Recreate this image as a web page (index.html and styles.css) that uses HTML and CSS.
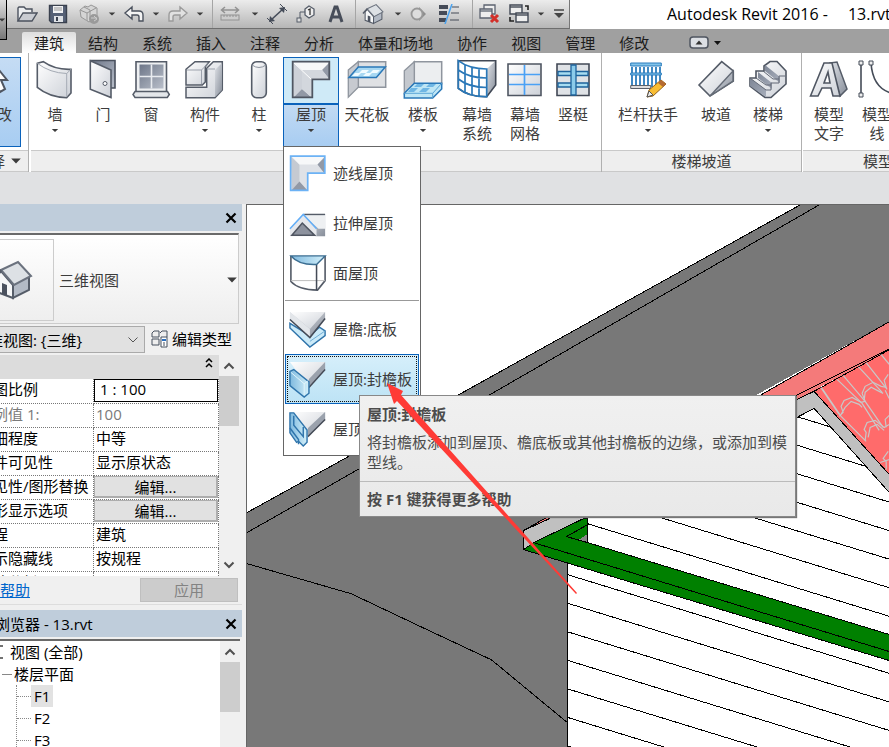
FILE: index.html
```html
<!DOCTYPE html>
<html lang="zh-CN">
<head>
<meta charset="utf-8">
<title>Autodesk Revit 2016 - 13.rvt</title>
<link rel="stylesheet" href="styles.css">
</head>
<body>
<svg class="defs" aria-hidden="true">
  <defs>
    <linearGradient id="face" x1="0" y1="0" x2="1" y2="1"><stop offset="0" stop-color="#fff"/><stop offset="1" stop-color="#cdd1d8"/></linearGradient>
    <linearGradient id="side" x1="0" y1="0" x2="1" y2="1"><stop offset="0" stop-color="#dfe2e7"/><stop offset="1" stop-color="#868d99"/></linearGradient>
    <linearGradient id="dark" x1="0" y1="0" x2="1" y2="1"><stop offset="0" stop-color="#6d7688"/><stop offset="1" stop-color="#b9bfca"/></linearGradient>
    <linearGradient id="blue" x1="0" y1="0" x2="1" y2="0"><stop offset="0" stop-color="#7fb9de"/><stop offset="1" stop-color="#d3f0fa"/></linearGradient>
    <symbol id="down" viewBox="0 0 10 6"><path d="M1 1h8l-4 4z" fill="#3c3c3c"/></symbol>
    <symbol id="close" viewBox="0 0 12 12"><path d="M1.500 1.500l9 9M10.500 1.500l-9 9" stroke="#000" stroke-width="2.200"/></symbol>
    <symbol id="chev-up" viewBox="0 0 12 8"><path d="M1.500 6.500L6 2l4.500 4.500" fill="none" stroke="#505050" stroke-width="2"/></symbol>
    <symbol id="chev-down" viewBox="0 0 12 8"><path d="M1.500 1.500L6 6l4.500-4.500" fill="none" stroke="#505050" stroke-width="2"/></symbol>
    <symbol id="house" viewBox="0 0 42 42">
      <path d="M6 17l4-5 12 14v13L6 33z" fill="#f6f7f8" stroke="#555c68" stroke-width="2"/>
      <path d="M22 25l16-8v14l-16 8z" fill="#b3bac5" stroke="#555c68" stroke-width="2"/>
      <path d="M11 24l5 2v11l-5-2z" fill="#4b525f"/>
      <path d="M10 11L27 3l13 14-17 9z" fill="#dde1e5" stroke="#6b727e" stroke-width="2"/>
      <path d="M10 11l-8 9" stroke="#555c68" stroke-width="3"/>
    </symbol>
  </defs>
</svg>

<header class="titlebar">
  <div class="quick">
    <button class="app" aria-label="应用程序菜单"><svg width="8" height="6"><use href="#down"/></svg></button>
    <button class="q30" aria-label="打开"><svg width="22" height="20" viewBox="0 0 22 20"><path d="M2 17V4l1-1h5l2 2h6v3" fill="#eceef0" stroke="#4b525e" stroke-width="1.400"/><path d="M2 17L7 9h14l-5 8z" fill="#c9ccd2" stroke="#4b525e" stroke-width="1.400"/></svg></button>
    <button class="q32" aria-label="保存"><svg width="20" height="20" viewBox="0 0 20 20"><path d="M1.500 1.500h17v17h-15l-2-2z" fill="#566176" stroke="#3a414e" stroke-width="1.400"/><path d="M5 2h10v7H5z" fill="#f1f2f4"/><path d="M6 4h8M6 6h8" stroke="#999"/><path d="M6 12h9v6H6z" fill="#dfe2e6"/><path d="M8 13h2v4H8z" fill="#3a414e"/></svg></button>
    <button class="q30" aria-label="同步"><svg width="22" height="22" viewBox="0 0 22 22"><g fill="#d5d5d5" stroke="#969696"><path d="M2 7l5-4 3 1 3-2 6 3v9l-8 5-8-5z"/><path d="M2 7l7 3v8M9 10l9-5M6 4l6 3v9"/></g><circle cx="16" cy="16" r="5" fill="#9a9a9a"/><path d="M13 15h6M16 13l3 3-3 2" stroke="#ccc" fill="none"/></svg></button>
    <button class="q16" aria-label="同步选项"><svg width="8" height="6"><use href="#down"/></svg></button>
    <button class="q28" aria-label="放弃"><svg width="22" height="18" viewBox="0 0 22 18"><path d="M2 8l7-6v4h7q4 0 4 4v6h-4v-4q0-2-2-2H9v4z" fill="#f3f3f3" stroke="#4b525e" stroke-width="1.400"/></svg></button>
    <button class="q16" aria-label="放弃列表"><svg width="8" height="6"><use href="#down"/></svg></button>
    <button class="q28" aria-label="重做"><svg width="22" height="18" viewBox="0 0 22 18"><path d="M20 8l-7-6v4H6q-4 0-4 4v6h4v-4q0-2 2-2h5v4z" fill="#e1e1e1" stroke="#9b9b9b" stroke-width="1.400"/></svg></button>
    <button class="q16" aria-label="重做列表"><svg width="8" height="6"><use href="#down"/></svg></button>
    <span class="divider"></span>
    <button class="q34" aria-label="测量"><svg width="20" height="16" viewBox="0 0 20 16"><path d="M2 4h16M5 1L1.500 4 5 7M15 1l3.500 3L15 7" fill="none" stroke="#929292" stroke-width="1.500"/><rect x="1" y="9" width="18" height="5" fill="#ccc" stroke="#929292"/><path d="M4 9v2M7 9v2M10 9v2M13 9v2M16 9v2" stroke="#929292"/></svg></button>
    <button class="q16" aria-label="测量选项"><svg width="8" height="6"><use href="#down"/></svg></button>
    <button class="q28" aria-label="对齐尺寸标注"><svg width="22" height="22" viewBox="0 0 22 22"><path d="M5 17L17 6" stroke="#454c59" stroke-width="1.600"/><path d="M3 19l1-6 5 5zM19 4l-1 6-5-5z" fill="#454c59"/><path d="M1 15l6 6M14 1l7 7" stroke="#454c59"/></svg></button>
    <button class="q30" aria-label="按类别标记"><svg width="20" height="18" viewBox="0 0 20 18"><path d="M9 4l4-3 5 3v6l-5 3-4-3z" fill="#eee" stroke="#555c68" stroke-width="1.300"/><path d="M9 7H4v7" fill="none" stroke="#555c68"/><rect x="1" y="13" width="4" height="4" fill="#ddd" stroke="#555c68"/><path d="M12 5l2-1v6" fill="none" stroke="#333" stroke-width="1.300"/></svg></button>
    <button class="q30" aria-label="文字"><svg width="18" height="20" viewBox="0 0 18 20"><path d="M3 18L8 3h2l5 15M5 13h8" fill="none" stroke="#474d59" stroke-width="3"/></svg></button>
    <span class="divider"></span>
    <button class="q34" aria-label="默认三维视图"><svg width="22" height="22"><use href="#house"/></svg></button>
    <button class="q16" aria-label="三维视图选项"><svg width="8" height="6"><use href="#down"/></svg></button>
    <button class="q24" aria-label="剖面"><svg width="18" height="18" viewBox="0 0 18 18"><path d="M10 2l7 7-7 7z" fill="#8d8d8d"/><circle cx="8" cy="9" r="5.500" fill="#ddd" stroke="#989898" stroke-width="1.800"/></svg></button>
    <button class="q38" aria-label="细线"><svg width="22" height="20" viewBox="0 0 22 20"><path d="M1 3h9M1 9h8M1 16h7" stroke="#454b57" stroke-width="4"/><path d="M14 3h7M13 9h8M12 16h9" stroke="#454b57"/><path d="M14 0L7 20" stroke="#4aa3ef" stroke-width="1.500"/></svg></button>
    <span class="divider"></span>
    <button class="q32" aria-label="关闭隐藏窗口"><svg width="22" height="22" viewBox="0 0 22 22"><g fill="#eee" stroke="#5c6370" stroke-width="1.300"><path d="M6 2h11v9H6z"/><path d="M2 6h12v9H2z"/><path d="M2 8h12"/></g><path d="M13 12l7 7M20 12l-7 7" stroke="#d3302a" stroke-width="3"/></svg></button>
    <button class="q28" aria-label="切换窗口"><svg width="22" height="22" viewBox="0 0 22 22"><g fill="#eee" stroke="#414854" stroke-width="1.400"><path d="M2 2h12v9H2z"/><path d="M2 4h12"/><path d="M8 10h12v9H8z"/><path d="M8 12h12"/></g><path d="M17 3h3v4M2 14v4h4" fill="none" stroke="#222" stroke-width="1.600"/></svg></button>
    <button class="q16" aria-label="切换窗口选项"><svg width="8" height="6"><use href="#down"/></svg></button>
    <button class="q20" aria-label="自定义快速访问工具栏"><svg width="12" height="10" viewBox="0 0 12 10"><path d="M1 1h10" stroke="#444" stroke-width="1.500"/><path d="M1 4h10L6 9z" fill="#444"/></svg></button>
  </div>
  <h1 class="app-title"><span>Autodesk Revit 2016 -</span><span>13.rvt</span></h1>
</header>

<nav class="tabs">
  <button class="tab current">建筑</button><button class="tab">结构</button><button class="tab">系统</button><button class="tab">插入</button><button class="tab">注释</button><button class="tab">分析</button><button class="tab">体量和场地</button><button class="tab">协作</button><button class="tab">视图</button><button class="tab">管理</button><button class="tab">修改</button>
  <button class="ribbon-toggle" aria-label="最小化功能区"><svg width="32" height="14" viewBox="0 0 32 14"><rect x="1" y="1" width="18" height="11" rx="3" fill="#dcdfe4" stroke="#4f5560" stroke-width="1.500"/><path d="M6.500 8.500h7L10 4.500z" fill="#333"/><path d="M25 5h7l-3.500 4z" fill="#111"/></svg></button>
</nav>

<section class="ribbon">
  <div class="panel select-panel">
    <div class="tools"><button class="tool active plain"><svg class="icon" viewBox="0 0 40 40"><path d="M23 6l12 15h-6l4 9-5 3-4-8-6 6z" fill="#fff" stroke="#4f5662" stroke-width="2"/></svg><span class="label">修改</span></button></div>
    <div class="panel-name">选择<svg width="12" height="8"><use href="#down"/></svg></div>
  </div>
  <div class="panel build">
    <div class="tools">
      <button class="tool w48"><svg class="icon" viewBox="0 0 40 40"><path d="M2.300 4.300L8.300 2.700Q20 11 36 10.300V34l-4.300 4.700Q14 38 2.300 28.300z" fill="url(#face)" stroke="#555c68" stroke-width="1.600"/><path d="M2.300 4.300Q15 14 31.700 14.500L36 10.300M31.700 14.500V38" fill="none" stroke="#a4aab4"/></svg><span class="label">墙</span><svg class="more"><use href="#down"/></svg></button>
      <button class="tool w48"><svg class="icon" viewBox="0 0 40 40"><path d="M7 1.500h25V29h-6" fill="url(#dark)" stroke="#4a515e" stroke-width="1.600"/><path d="M7.300 1.700L28 11v27.500L7.300 30.300z" fill="url(#face)" stroke="#555c68" stroke-width="1.600"/><circle cx="22" cy="24.500" r="2" fill="#fff" stroke="#555c68"/></svg><span class="label">门</span></button>
      <button class="tool w48"><svg class="icon" viewBox="0 0 40 40"><path d="M5 2.700h30.500v30H5z" fill="#eef0f2" stroke="#555c68" stroke-width="1.600"/><path d="M8.500 5.500h24v24h-24z" fill="url(#dark)"/><path d="M20.500 5.500v24M8.500 17.500h24" stroke="#e8ebef" stroke-width="1.600"/><path d="M4 32.500h32.500l1.800 3-2 3H4l-2-3z" fill="#e4e7ea" stroke="#555c68" stroke-width="1.500"/></svg><span class="label">窗</span></button>
      <button class="tool w60"><svg class="icon" viewBox="0 0 40 40"><path d="M1 10.300L10 2.700h14.300l-4 5V23l-3 3H1z" fill="url(#face)" stroke="#555c68" stroke-width="1.500"/><path d="M1 28.300h20.700v-19l6.600-6.600h9V31L30 38.700H1z" fill="url(#face)" stroke="#555c68" stroke-width="1.500"/><path d="M30 11l7-7v27l-7 7z" fill="url(#side)"/><path d="M22 10h8M2 11h14.500v14M16.500 11l7-7" fill="none" stroke="#9ba1ac"/></svg><span class="label">构件</span><svg class="more"><use href="#down"/></svg></button>
      <button class="tool w48"><svg class="icon" viewBox="0 0 40 40"><rect x="12.700" y="2.700" width="14.600" height="36" rx="5" fill="url(#face)" stroke="#555c68" stroke-width="1.600"/><path d="M13 6q7 5 14 0" fill="none" stroke="#8d949f"/></svg><span class="label">柱</span><svg class="more"><use href="#down"/></svg></button>
      <div class="dropdown">
        <button class="tool w56 active split" aria-expanded="true"><svg class="icon" viewBox="0 0 40 40"><path d="M1.700 2.700h36.600v17.600h-17v18H1.700z" fill="#e8eaee"/><path d="M2.500 3.500L11 11v19l-8.500 8z" fill="#cdd1d8"/><path d="M3 3.500h35L31 11H11z" fill="#f7f8f9"/><path d="M31 11l7-7v16zM11 30l9 8H3z" fill="#9299a6"/><path d="M11 11h20l7 8.500H20.500V38L11 30z" fill="#d3d7dd"/><path d="M2.500 3.500l18 17" stroke="#fff"/><path d="M1.700 2.700h36.600v17.600h-17v18H1.700z" fill="none" stroke="#4f5662" stroke-width="1.800"/></svg><span class="label">屋顶</span><svg class="more"><use href="#down"/></svg></button>
        <div class="menu" role="menu">
          <button class="menu-item" role="menuitem"><svg viewBox="0 0 40 40"><path d="M1.700 2.200h36v18h-18v18h-18z" fill="#dfe2e7"/><path d="M2 3L11 11v19l-8 8z" fill="#c5cad2"/><path d="M3 3h34l-7 8H11z" fill="#f7f8f9"/><path d="M30 11l7-7v16zM11 29l8 9H3z" fill="#9299a6"/><path d="M1.700 2.200h36v18h-18v18h-18z" fill="none" stroke="#6cb2f5" stroke-width="1.800"/></svg>迹线屋顶</button>
          <button class="menu-item" role="menuitem"><svg viewBox="0 0 40 40"><path d="M16 11h22v23H28z" fill="url(#side)"/><path d="M15 11l16 15h7V11z" fill="#eef0f2"/><path d="M16 11h22" stroke="#555c68" stroke-width="1.500"/><path d="M1 34V26l14-15 14 15v8z" fill="#e6e8ec"/><path d="M3 33l11-13 13 13z" fill="#8d929e" stroke="#4f5561" stroke-width="1.600"/><path d="M1 26l14-15 14 15" fill="none" stroke="#63aef7" stroke-width="1.600"/></svg>拉伸屋顶</button>
          <button class="menu-item" role="menuitem"><svg viewBox="0 0 40 40"><path d="M2 2v27q8 9 28 9l8-10V2" fill="#fff" stroke="#555c68" stroke-width="1.700"/><path d="M2 28h36" stroke="#bbb"/><path d="M29 11v27" stroke="#444b57" stroke-width="1.600"/><path d="M2 2h36l-9 9Q11 12 2 2z" fill="url(#blue)" stroke="#3b6d91" stroke-width="1.500"/></svg>面屋顶</button>
          <hr>
          <button class="menu-item" role="menuitem"><svg viewBox="0 0 40 40"><path d="M1 14v5l21 20 16-12v-5l-6-4-10 9z" fill="#cbeaf8" stroke="#2f74ab" stroke-width="1.500"/><path d="M22 33l16-11" stroke="#6cabd4"/><path d="M1 2v8l21 19 16-20V2z" fill="url(#side)"/><path d="M1 2h37L22 20z" fill="url(#face)"/><path d="M22 20v9L1 10V2z" fill="#e3e6ea"/><path d="M1 10l21 19L38 9" fill="none" stroke="#444a56" stroke-width="1.600"/></svg>屋檐:底板</button>
          <div class="item-wrap">
            <button class="menu-item hot" role="menuitem" aria-describedby="tip"><svg viewBox="0 0 40 40"><path d="M1 2h37v8L21 29z" fill="url(#face)"/><path d="M38 2v8L21 29V20z" fill="#9ba2ad"/><path d="M38 10L21 29" stroke="#444a56" stroke-width="1.500"/><path d="M1 12l4-2 16 13v12l-5 4L1 27z" fill="url(#blue)" stroke="#2f74ab" stroke-width="1.500"/><path d="M16 37V25l4-3M2 13l14 12" fill="none" stroke="#e4f6fc"/></svg>屋顶:封檐板</button>
            <div class="tip" id="tip" role="tooltip">
              <div class="tip-body"><strong>屋顶:封檐板</strong><p>将封檐板添加到屋顶、檐底板或其他封檐板的边缘，或添加到模型线。</p></div>
              <div class="tip-help"><strong>按 F1 键获得更多帮助</strong></div>
            </div>
          </div>
          <button class="menu-item" role="menuitem"><svg viewBox="0 0 40 40"><path d="M1 2h37v8L20 29z" fill="url(#face)"/><path d="M38 2v8L20 29V19z" fill="#9ba2ad"/><path d="M38 10L20 28" stroke="#444a56" stroke-width="1.500"/><path d="M1 3h4l14 18v13l-4 4-5-5-2 1-7-10z" fill="url(#blue)" stroke="#2f74ab" stroke-width="1.500"/><path d="M5 6v10l10 12V18M1 19l9 12v5" fill="none" stroke="#2f74ab" stroke-width="1.500"/></svg>屋顶:檐槽</button>
        </div>
      </div>
      <button class="tool w56"><svg class="icon" viewBox="0 0 40 40"><path d="M11.300 2.700h27.400v25.600H11.300z" fill="#dfe1e4" stroke="#8f959e" stroke-width="1.500"/><path d="M1.300 11l10-8.300v25.600l-10 10z" fill="#c7cad0" stroke="#8f959e" stroke-width="1.300"/><path d="M11.300 8h27l-9 10.500H2z" fill="#a8d8f2" stroke="#2a78b8" stroke-width="1.500"/><path d="M15 11h7l-3 3h-7zM26 11h7l-3 3h-7zM8 14h6l-3 3H5zM19 14h6l-3 3h-6z" fill="#f0fbff"/></svg><span class="label">天花板</span></button>
      <button class="tool w56"><svg class="icon" viewBox="0 0 40 40"><path d="M11.300 2.700h27.400v22H11.300z" fill="#eceef0" stroke="#8f959e" stroke-width="1.500"/><path d="M1.300 11.700l10-9v22l-10 9.600z" fill="#c4c8ce" stroke="#8f959e" stroke-width="1.300"/><path d="M11.300 24.300h27.400V30l-9 9H1.300v-4.700z" fill="#bfe6f5" stroke="#2a78b8" stroke-width="1.500"/><path d="M1.300 34.300h28.400l9-10M29.700 34.300V39" fill="none" stroke="#5aa5d6"/><path d="M14 25h7l-3 3h-7zM26 25h7l-3 3h-7zM8 29h7l-4 4H5zM20 29h7l-4 4h-7z" fill="#6fb6e4"/></svg><span class="label">楼板</span><svg class="more"><use href="#down"/></svg></button>
      <button class="tool w52"><svg class="icon" viewBox="0 0 40 40"><path d="M29.700 10l9-8.300V26l-9 11.700z" fill="url(#side)"/><path d="M1.300 1.700h37.400V26l-9 11.700Q12 38 1.300 29.300z" fill="none" stroke="#414855" stroke-width="1.600"/><path d="M1.300 1.700Q12 10 29.700 10v27.700Q12 38 1.300 29.300zM1.300 11Q12 19 29.700 19M1.300 20Q12 28.500 29.700 28.500M8 6v28M15 8.500v28M22 9.500v28" fill="none" stroke="#2a78b8" stroke-width="1.700"/></svg><span class="label">幕墙<br>系统</span></button>
      <button class="tool w44"><svg class="icon" viewBox="0 0 40 40"><path d="M3 5h33v31.500H3z" fill="url(#face)" stroke="#4f5662" stroke-width="1.600"/><path d="M19.500 6v30M4 15.500h31M4 25.500h31" stroke="#4aa1f5" stroke-width="1.700"/></svg><span class="label">幕墙<br>网格</span></button>
      <button class="tool w52"><svg class="icon" viewBox="0 0 40 40"><path d="M4 5h32v31.500H4z" fill="#dfe2e6" stroke="#414855" stroke-width="1.600"/><path d="M5 12.500h30v4H5zM5 24h30v4H5z" fill="#a7dcf1" stroke="#1e639c" stroke-width="1.300"/><path d="M18 6h5v30h-5z" fill="#8bcbea" stroke="#1e639c" stroke-width="1.300"/></svg><span class="label">竖梃</span></button>
    </div>
    <div class="panel-name"></div>
  </div>
  <div class="panel stairs">
    <div class="tools">
      <button class="tool w92"><svg class="icon" viewBox="0 0 40 40"><path d="M4 8v20M8 8v20M12 8v20M16 8v20M20 8v20M24 8v20M28 8v20M32 8v20" stroke="#2c7dbd" stroke-width="1.800"/><path d="M2.700 4h30.600v3H2.700zM2.700 14h30.600v2H2.700z" fill="#82c4ea" stroke="#2c7dbd"/><path d="M2.700 26.500h20v3h-20z" fill="#ddd" stroke="#5a6069"/><path d="M19 38l2-7L33 21l5 4-13 12z" fill="#f8bd33" stroke="#95621a"/><path d="M33 21l5 4-3 3-5-4z" fill="#b46a32"/><path d="M19 38l2-6 4 4z" fill="#eee" stroke="#555"/></svg><span class="label">栏杆扶手</span><svg class="more"><use href="#down"/></svg></button>
      <button class="tool w44"><svg class="icon" viewBox="0 0 40 40"><path d="M3 26L25.700 2.700l11.600 9.300v10L14 37z" fill="url(#face)" stroke="#555c68" stroke-width="1.600"/><path d="M14 37l23-25v10z" fill="url(#side)" stroke="#646b76" stroke-width="1.400"/></svg><span class="label">坡道</span></button>
      <button class="tool w60"><svg class="icon" viewBox="0 0 40 40"><path d="M2 19h6v-7h8V7l6-4.500h7L38 12v13L23 38.500h-6L2 27z" fill="url(#face)" stroke="#4f5662" stroke-width="1.600"/><path d="M2 19l16 12v7L2 27zM10 13l14 11v6L10 19zM17 6l15 12v6L17 12z" fill="url(#dark)"/><path d="M2 19l16 12h5v-7h8v-7h6M8 19l10 7h5M15 12l10 8h6" fill="none" stroke="#626976"/></svg><span class="label">楼梯</span><svg class="more"><use href="#down"/></svg></button>
    </div>
    <div class="panel-name">楼梯坡道</div>
  </div>
  <div class="panel model">
    <div class="tools">
      <button class="tool w52"><svg class="icon" viewBox="0 0 40 40"><path d="M21 4l7-1 10 27-7 7z" fill="url(#side)" stroke="#555c68" stroke-width="1.500"/><path d="M1.500 37L15 4h8l8 33h-7l-2-8h-9l-4 8zM15 24h6l-2-11z" fill="url(#face)" fill-rule="evenodd" stroke="#4f5662" stroke-width="1.600"/></svg><span class="label">模型<br>文字</span></button>
      <button class="tool w44"><svg class="icon" viewBox="0 0 40 40"><path d="M4 4v32M14 4q2 28 25 31" fill="none" stroke="#454c58" stroke-width="1.600"/><path d="M2 2h4v4H2zM2 34h4v4H2zM12 2h4v4h-4z" fill="#eee" stroke="#454c58"/></svg><span class="label">模型<br>线</span></button>
    </div>
    <div class="panel-name">模型</div>
  </div>
</section>
<div class="options-bar"></div>

<main class="workspace">
  <aside class="sidebar">
    <section class="props">
      <header class="dock-title"><span>属性</span><button aria-label="关闭属性"><svg width="12" height="12"><use href="#close"/></svg></button></header>
      <button class="type-picker"><span class="thumb"><svg width="42" height="42"><use href="#house"/></svg></span><span>三维视图</span><svg class="pick" width="12" height="8"><use href="#down"/></svg></button>
      <div class="type-row">
        <div class="combo"><select aria-label="视图"><option>三维视图: {三维}</option></select><svg width="12" height="8"><path d="M1.500 1.500L6 6l4.500-4.500" fill="none" stroke="#555"/></svg></div>
        <button class="edit-type"><svg width="18" height="18" viewBox="0 0 18 18"><path d="M1 3l2-2h5v6H1zM9 3l2-2h5v6M1 9h7v6H1z" fill="#eee" stroke="#47505f"/><path d="M10 7h6v10h-6z" fill="#fff" stroke="#47505f"/><path d="M11 9h4v2h-4z" fill="#2a6fc0"/><path d="M12 13h2M12 15h2" stroke="#47505f"/></svg>编辑类型</button>
      </div>
      <div class="grid-wrap">
        <div class="grid">
          <button class="category"><span>图形</span><svg width="8" height="10" viewBox="0 0 8 10"><path d="M1 4l3-3 3 3M1 9l3-3 3 3" fill="none" stroke="#000" stroke-width="1.500"/></svg></button>
          <table>
            <tr><th><label for="scale">视图比例</label></th><td><input id="scale" value="1 : 100"></td></tr>
            <tr class="dim"><th>比例值 1:</th><td>100</td></tr>
            <tr><th>详细程度</th><td>中等</td></tr>
            <tr><th>零件可见性</th><td>显示原状态</td></tr>
            <tr><th>可见性/图形替换</th><td><button>编辑...</button></td></tr>
            <tr><th>图形显示选项</th><td><button>编辑...</button></td></tr>
            <tr><th>规程</th><td>建筑</td></tr>
            <tr><th>显示隐藏线</th><td>按规程</td></tr>
            <tr><th>默认分析显示</th><td>无</td></tr>
          </table>
        </div>
        <div class="scroll"><svg width="12" height="8"><use href="#chev-up"/></svg><i></i><svg width="12" height="8"><use href="#chev-down"/></svg></div>
      </div>
      <footer class="props-foot"><a href="#help">属性帮助</a><button disabled>应用</button></footer>
    </section>
    <section class="browser">
      <header class="dock-title"><span>项目浏览器 - 13.rvt</span><button aria-label="关闭项目浏览器"><svg width="12" height="12"><use href="#close"/></svg></button></header>
      <div class="tree-wrap">
        <ul class="tree">
          <li><span class="node root"><svg width="12" height="14" viewBox="0 0 12 14"><path d="M12 1H7v12h5" fill="none" stroke="#444" stroke-width="1.500"/></svg>视图 (全部)</span>
            <ul><li><span class="node floor">楼层平面</span>
              <ul class="leaves"><li><span class="picked">F1</span></li><li><span>F2</span></li><li><span>F3</span></li></ul></li></ul></li>
        </ul>
        <div class="scroll"><svg width="12" height="8"><use href="#chev-up"/></svg><i></i></div>
      </div>
    </section>
  </aside>
  <section class="view" aria-label="三维视图">
    <svg viewBox="248 206 641 541" preserveAspectRatio="xMinYMin slice" shape-rendering="crispEdges">
      <clipPath id="wall"><path d="M588 519L797 418l17-9 76 85v254H568V560h20z"/></clipPath>
      <clipPath id="tiles"><path d="M814 392l76-42v126z"/></clipPath>
      <path d="M248 513L335 465 460 395 800 206h90v116L567 500v248H248z" fill="#787878"/>
      <path d="M248 513L335 465 460 395 800 206M248 533L350 475 491 395 740 251.500 819 206M248 564l104 30 76 36 64 30 75 62" fill="none" stroke="#000"/>
      <path d="M524 531L762 395l128-73v28L530 545z" fill="#f47a7a"/>
      <path d="M524 531L762 395l128-73M890 349L550 520" fill="none" stroke="#000"/>
      <path d="M588 519L797 418l17-9 76 85v254H567.500V560H588z" fill="#fff"/>
      <path clip-path="url(#wall)" d="M568 318.500l322 98.800M568 347l322 98.800M568 375.500l322 98.800M568 404l322 98.800M568 432.500l322 98.800M568 461l322 98.800M568 489.500l322 98.800M568 518l322 98.800M568 546.500l322 98.800M568 575l322 98.800M568 603.500l322 98.800M568 632l322 98.800M568 660.500l322 98.800M568 689l322 98.800M568 717.500l322 98.800M568 746l322 98.800" stroke="#000" fill="none"/>
      <path d="M524 531l26-12 247-119 17-8 76 84v18l-76-85-17 9-263 125-10 7z" fill="#c0c0c0" stroke="#000"/>
      <path d="M814 392l76-42v126z" fill="#ff6b6b" stroke="#000"/>
      <g clip-path="url(#tiles)" fill="none" stroke="#c8c8c8" shape-rendering="auto" stroke-width="1.200">
        <path d="M820 387l19 28M822 389l19 28M837 380l25 24M843 376l22 26M858 367l24 26M865 362l22 28M880 354l9 11M862 404l17 27M865 402l18 26M841 417l25 25M885 391l4 8"/>
        <path d="M839 417l4-4-2-6 3-6 8-3 9 5 4-1-3-8 3-7 8-4 8 4 5 1-2-7 4-6M841 415l4-7 6-6 8 3 3 3M864 401l1-8 6-5 8 4 4 2M865 441l1-8-2-3 3-7 8-2 9 7 5-3M868 438l2-10 7-3 7 6M886 470v-8l-3-3 5-7M880 463l9-3M886 428l-1-8 4-4"/>
      </g>
      <path d="M524 531l59-27v15l-49 24-10 7z" fill="#c0c0c0"/><path d="M524 550V531l26-12M534 517l10-5" fill="none" stroke="#000"/>
      <path d="M524 550l10-7 50-24h4v24l302 92v26z" fill="#008000" stroke="#000"/>
      <path d="M578 541l9-6v8z" fill="#888"/><path d="M588 525l-21 12 21 6M534 543l356 109M567.500 562v186" fill="none" stroke="#000"/>
    </svg>
  </section>
</main>
<svg class="callout" viewBox="0 0 200 220" aria-hidden="true"><path d="M2 2l16 8-2 4L192 212l-1 1L12 20l-3 3z" fill="#ff3b36"/></svg>
</body>
</html>
```
FILE: styles.css
```css
* { box-sizing: border-box; }

body {
  margin: 0;
  height: 100vh;
  display: flex;
  flex-direction: column;
  overflow: hidden;
  position: relative;
  background: #f0f0f0;
  color: #000;
  font: 15px/20px "Open Sans", "Noto Sans CJK SC", sans-serif;
}

button, input, select { font: inherit; color: inherit; margin: 0; padding: 0; border: 0; background: none; border-radius: 0; }
ul { list-style: none; margin: 0; padding: 0; }
svg { display: block; flex: none; }
.defs { position: absolute; width: 0; height: 0; }

/* Title bar and quick access */
.titlebar { display: flex; height: 29px; flex: none; background: #fff; }
.quick {
  display: flex;
  flex: none;
  align-items: stretch;
  background: linear-gradient(#ececec, #b6b6b6);
  border-bottom: 1px solid #6e6e6e;
  border-right: 1px solid #777;
}
.quick button { display: flex; align-items: center; justify-content: center; }
.quick .app {
  width: 7px;
  height: 40px;
  margin-right: 5px;
  overflow: hidden;
  justify-content: flex-end;
  position: relative;
  background: linear-gradient(#ddd, #777);
  border: solid #000;
  border-width: 0 1px 1px 0;
}
.q16 { width: 16px; }
.q20 { width: 20px; }
.q24 { width: 24px; }
.q28 { width: 28px; }
.q30 { width: 30px; }
.q32 { width: 32px; }
.q34 { width: 34px; }
.q38 { width: 38px; }
.divider { width: 1px; margin-left: 4px; background: #a5a5a5; }
.app-title { display: flex; gap: 20px; margin: 0; padding-left: 97px; font-size: 16px; font-weight: 400; line-height: 29px; white-space: nowrap; }

/* Tabs */
.tabs { display: flex; flex: none; height: 24px; padding: 3px 0 0 22px; background: #a0a0a0; }
.tab { flex: none; padding: 0 12px; line-height: 20px; color: #1c1c1c; }
.tab.current { background: linear-gradient(#dedede, #fff); border-radius: 2px 2px 0 0; }
.ribbon-toggle { margin-left: 28px; }

/* Ribbon */
.ribbon { display: flex; flex: none; height: 119px; background: #fff; color: #3c3c3c; }
.panel { display: flex; flex-direction: column; flex: none; border-right: 1px solid #b0b0b0; }
.select-panel { width: 69px; margin-left: -40px; }
.select-panel .tool { width: 61px; }
.build { width: 573px; padding-left: 2px; }
.stairs { width: 200px; }
.model { width: 152px; padding-left: 1px; }
.tools { display: flex; flex: 1; padding-top: 4px; }
.tool {
  flex: none;
  height: 90px;
  display: flex;
  flex-direction: column;
  align-items: center;
  padding-top: 1px;
  border: 1px solid transparent;
}
.icon { width: 40px; height: 40px; }
.label { margin-top: 6px; line-height: 19px; white-space: nowrap; }
.more { width: 8px; height: 5px; margin-top: 4px; }
.w44 { width: 44px; }
.w48 { width: 48px; }
.w52 { width: 52px; }
.w56 { width: 56px; }
.w60 { width: 60px; }
.w92 { width: 92px; }
.active { border: 1px solid #0a62bb; }
.plain { background: linear-gradient(#c5dcf4, #a8cdf2); }
.select-panel .plain { align-items: flex-end; padding-right: 8px; }
.split { background: linear-gradient(#cfeaf7 45px, #0a62bb 45px, #0a62bb 47px, #c2daf3 47px, #a8cdf2); }
.panel-name {
  height: 22px;
  display: flex;
  align-items: center;
  justify-content: center;
  gap: 5px;
  background: #eee;
  border: solid #c9c9c9;
  border-width: 1px 0;
}
.select-panel .panel-name { justify-content: flex-end; padding-right: 6px; }
.options-bar { flex: none; height: 32px; background: #e0e1e3; }

/* Roof menu */
.dropdown { position: relative; z-index: 3; }
.menu {
  position: absolute;
  top: 89px;
  left: 0;
  width: 138px;
  padding: 1px;
  background: #fff;
  border: 1px solid #666;
}
.menu-item {
  display: flex;
  align-items: center;
  gap: 6px;
  width: 100%;
  height: 50px;
  padding-left: 3px;
  border: 1px solid transparent;
  text-align: left;
  white-space: nowrap;
}
.menu-item svg { width: 38px; height: 38px; }
.menu hr { margin: 2px 0 3px; border: 0; border-top: 1px solid #999; }
.item-wrap { position: relative; z-index: 1; }
.hot { background: linear-gradient(#d6effb, #bde3f5); border-color: #0a62bb; outline: 1px dotted #111; outline-offset: -3px; }
.tip {
  position: absolute;
  top: 41px;
  left: 74px;
  width: 437px;
  background: linear-gradient(#f0f0f0, #e9e9e9);
  border: 1px solid #888;
  box-shadow: 1px 1px 1px #777;
  color: #4c4c4c;
}
.tip p { margin: 8px 0 0; }
.tip-body { padding: 8px 7px 9px; border-bottom: 1px solid #bbb; }
.tip-help { padding: 7px 7px 7px; }

/* Docked panels */
.workspace { display: flex; flex: 1; min-height: 0; }
.sidebar { display: flex; flex-direction: column; flex: none; width: 282px; margin: 0 4px 0 -40px; }
.props, .browser { display: flex; flex-direction: column; }
.props { border-bottom: 1px solid #ddd; margin-bottom: 5px; flex: none; }
.browser { flex: 1; min-height: 0; }
.dock-title {
  display: flex;
  align-items: center;
  justify-content: space-between;
  flex: none;
  height: 27px;
  padding: 0 5px;
  background: #bfcddb;
}
.type-picker {
  display: flex;
  align-items: center;
  height: 91px;
  margin: 2px 3px 0 0;
  padding: 4px 0 3px 8px;
  background: linear-gradient(#fff, #eee);
  border: 1px solid #ccc;
  border-top: 2px solid #6a6a6a;
  color: #3c3c3c;
}
.thumb { display: flex; align-items: center; justify-content: center; width: 85px; height: 82px; margin-right: 5px; border: 1px solid #ccc; }
.pick { margin-left: auto; }
.type-row { display: flex; align-items: center; gap: 6px; height: 31px; }
.combo { display: flex; align-items: center; width: 185px; height: 27px; padding: 0 5px 0 12px; background: #e1e1e1; border: 1px solid #aaa; }
.combo select { flex: 1; height: 25px; appearance: none; }
.edit-type { display: flex; align-items: center; gap: 3px; padding-bottom: 2px; }
.grid-wrap { display: flex; height: 221px; padding-right: 3px; overflow: hidden; }
.grid { flex: 1; background: #fff; }
.category { display: flex; align-items: center; justify-content: space-between; width: 100%; height: 24px; padding: 0 6px 8px 8px; background: #dcdcdc; }
table { width: 100%; border-collapse: collapse; table-layout: fixed; }
th, td { height: 24px; padding: 0 0 3px 2px; border: 1px dotted #777; border-top: 0; line-height: 20px; font-weight: 400; text-align: left; white-space: nowrap; overflow: hidden; }
th { width: 133px; padding-left: 17px; }
td input { display: block; width: 100%; height: 23px; padding: 0 0 3px 5px; border: 1px solid #000; }
td:has(input), td:has(button) { padding: 0; }
td button { display: block; width: 100%; height: 22px; background: #e1e1e1; border: solid #adadad; border-width: 1px 2px 2px 1px; line-height: 18px; }
.dim { color: #7a7a7a; }
.scroll { display: flex; flex-direction: column; align-items: center; flex: none; width: 20px; padding: 7px 0; background: #f0f0f0; }
.scroll i { width: 20px; height: 50px; margin: 6px 0 auto; background: #cdcdcd; }
.props-foot { display: flex; align-items: center; justify-content: space-between; height: 28px; padding: 0 4px 0 10px; }
.props-foot a { color: #0066cc; }
.props-foot button { width: 98px; height: 24px; background: #ccc; border: 1px solid #bfbfbf; color: #838383; }

/* Project tree */
.tree-wrap { display: flex; flex: 1; margin: 2px 2px 0 0; border-top: 2px solid #6a6a6a; background: #fff; overflow: hidden; }
.tree { flex: 1; }
.tree span { display: inline-flex; align-items: center; height: 22px; }
.tree li { line-height: 22px; }
.tree li > span { vertical-align: top; }
.root { gap: 7px; padding-left: 31px; }
.floor { padding-left: 54px; background: linear-gradient(#888, #888) 42px 11px / 10px 1px no-repeat; }
.leaves { margin-left: 56px; border-left: 1px dotted #888; }
.leaves li { display: flex; align-items: center; }
.leaves li::before { content: ""; width: 14px; border-top: 1px dotted #888; }
.leaves span { padding: 0 3px; }
.leaves .picked { background: #e2e2e2; }

/* Drawing area */
.view { flex: 1; min-width: 0; background: #fff; border: solid #666; border-width: 1px 0 0 1px; overflow: hidden; }
.view svg { width: 100%; height: 100%; }
.callout { position: absolute; z-index: 5; left: 385px; top: 381px; width: 200px; height: 220px; pointer-events: none; }
```
